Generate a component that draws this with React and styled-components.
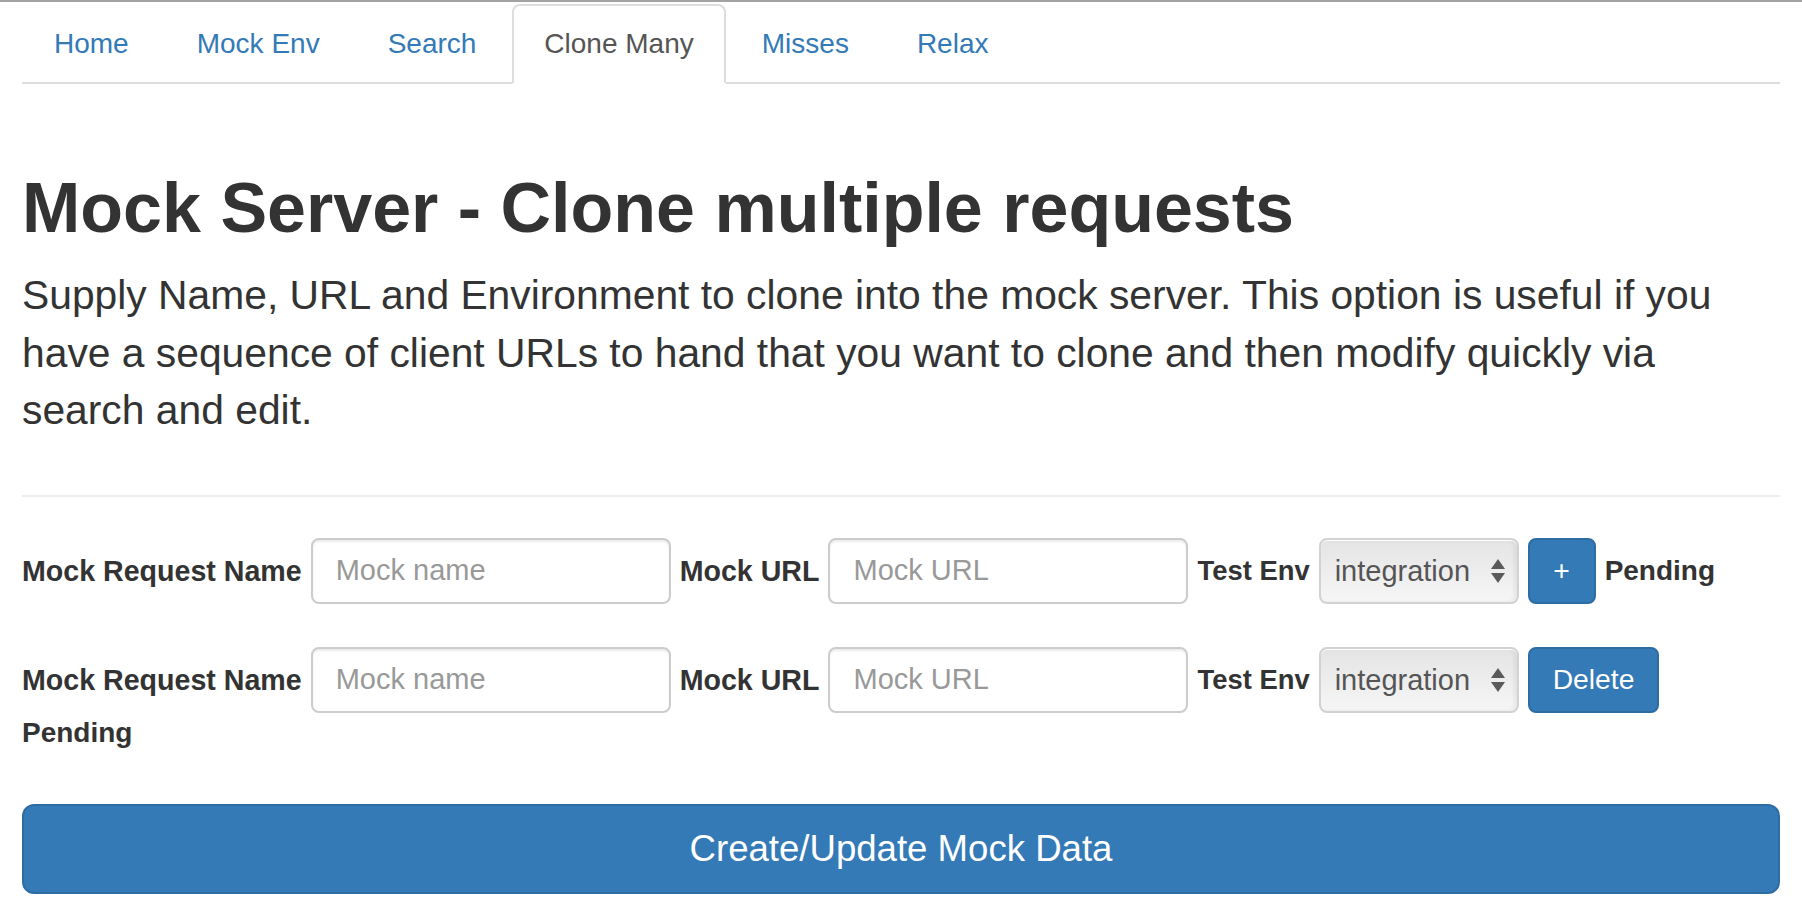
import React from "react";
import styled, { createGlobalStyle } from "styled-components";

const GlobalStyle = createGlobalStyle`
  body {
    margin: 0;
    background: #fff;
    color: #333;
    font-family: "Liberation Sans", Helvetica, Arial, sans-serif;
    font-size: 28px;
    line-height: 40px;
  }
  * { box-sizing: border-box; }
`;

const Page = styled.div`
  border-top: 2px solid #a2a2a2;
  padding: 0 22px;
`;

const Tabs = styled.ul`
  display: flex;
  list-style: none;
  margin: 2px 0 0;
  padding: 0;
  border-bottom: 2px solid #ddd;
`;

const Tab = styled.li`
  margin: 0 4px -2px 0;
`;

const TabLink = styled.a`
  display: block;
  padding: 18px 30px;
  border: 2px solid ${(p) => (p.$active ? "#ddd" : "transparent")};
  border-bottom-color: transparent;
  border-radius: 8px 8px 0 0;
  background: ${(p) => (p.$active ? "#fff" : "transparent")};
  color: ${(p) => (p.$active ? "#555" : "#337ab7")};
  text-decoration: none;
  font-size: 28px;
  line-height: 40px;
`;

const Title = styled.h1`
  margin: 86px 0 0;
  font-size: 70px;
  line-height: 77px;
  font-weight: bold;
  color: #333;
`;

const Lead = styled.p`
  margin: 20px 0 0;
  font-size: 40.8px;
  line-height: 57.5px;
  font-weight: normal;
`;

const Divider = styled.hr`
  margin: 55px 0 41px;
  border: 0;
  border-top: 2px solid #eee;
`;

const FormRow = styled.div`
  display: flex;
  flex-wrap: wrap;
  align-items: center;
  column-gap: 9px;
  margin-bottom: ${(p) => p.$gap || 0}px;
`;

const Label = styled.label`
  font-weight: bold;
  font-size: ${(p) => p.$size || 28.6}px;
  line-height: 40px;
  color: #333;
  flex-basis: ${(p) => (p.$block ? "100%" : "auto")};
`;

const TextInput = styled.input`
  width: 360px;
  height: 66px;
  padding: 0 23px;
  border: 2px solid #ccc;
  border-radius: 8px;
  box-shadow: inset 0 2px 2px rgba(0, 0, 0, 0.075);
  font-family: inherit;
  font-size: 29px;
  color: #555;
  outline: none;
  &::placeholder {
    color: #999;
  }
`;

const SelectWrap = styled.div`
  position: relative;
  width: 200px;
  height: 66px;
`;

const Select = styled.select`
  appearance: none;
  width: 100%;
  height: 100%;
  padding: 0 40px 0 14px;
  border: 2px solid #d2d2d2;
  border-radius: 8px;
  background: linear-gradient(#e4e4e4, #f6f6f6);
  box-shadow: inset 0 1px 0 #fff, inset -3px 0 4px rgba(0, 0, 0, 0.06);
  font-family: inherit;
  font-size: 29px;
  color: #555;
  outline: none;
`;

const Arrows = styled.svg`
  position: absolute;
  right: 14px;
  top: 21px;
  pointer-events: none;
`;

const Button = styled.button`
  height: ${(p) => (p.$large ? 90 : 66)}px;
  width: ${(p) => (p.$large ? "100%" : "auto")};
  min-width: 68px;
  padding: 0 ${(p) => (p.$square ? 0 : 23)}px;
  border: 2px solid #2e6da4;
  border-radius: ${(p) => (p.$large ? 12 : 8)}px;
  background: #337ab7;
  color: #fff;
  font-family: inherit;
  font-size: ${(p) => (p.$large ? 36.6 : 28.3)}px;
  cursor: pointer;
`;

const Actions = styled.div`
  margin-top: 51px;
`;

function EnvSelect() {
  return (
    <SelectWrap>
      <Select defaultValue="integration">
        <option value="integration">integration</option>
        <option value="staging">staging</option>
        <option value="production">production</option>
      </Select>
      <Arrows width="14" height="24" viewBox="0 0 14 24">
        <path d="M7 0 L14 10 L0 10 Z" fill="#5a5a5a" />
        <path d="M0 14 L14 14 L7 24 Z" fill="#5a5a5a" />
      </Arrows>
    </SelectWrap>
  );
}

const tabs = ["Home", "Mock Env", "Search", "Clone Many", "Misses", "Relax"];

function RequestRow({ action, gap, statusOnNewLine }) {
  return (
    <FormRow $gap={gap}>
      <Label>Mock Request Name</Label>
      <TextInput placeholder="Mock name" />
      <Label>Mock URL</Label>
      <TextInput placeholder="Mock URL" />
      <Label $size={27.4}>Test Env</Label>
      <EnvSelect />
      {action}
      <Label $block={statusOnNewLine} $size={28}>
        Pending
      </Label>
    </FormRow>
  );
}

export default function App() {
  return (
    <Page>
      <GlobalStyle />
      <Tabs>
        {tabs.map((t) => (
          <Tab key={t}>
            <TabLink href="#" $active={t === "Clone Many"}>
              {t}
            </TabLink>
          </Tab>
        ))}
      </Tabs>

      <Title>Mock Server - Clone multiple requests</Title>
      <Lead>
        Supply Name, URL and Environment to clone into the mock server. This
        option is useful if you have a sequence of client URLs to hand that you
        want to clone and then modify quickly via search and edit.
      </Lead>
      <Divider />

      <RequestRow gap={43} action={<Button $square>+</Button>} />
      <RequestRow action={<Button>Delete</Button>} statusOnNewLine />

      <Actions>
        <Button $large>Create/Update Mock Data</Button>
      </Actions>
    </Page>
  );
}
